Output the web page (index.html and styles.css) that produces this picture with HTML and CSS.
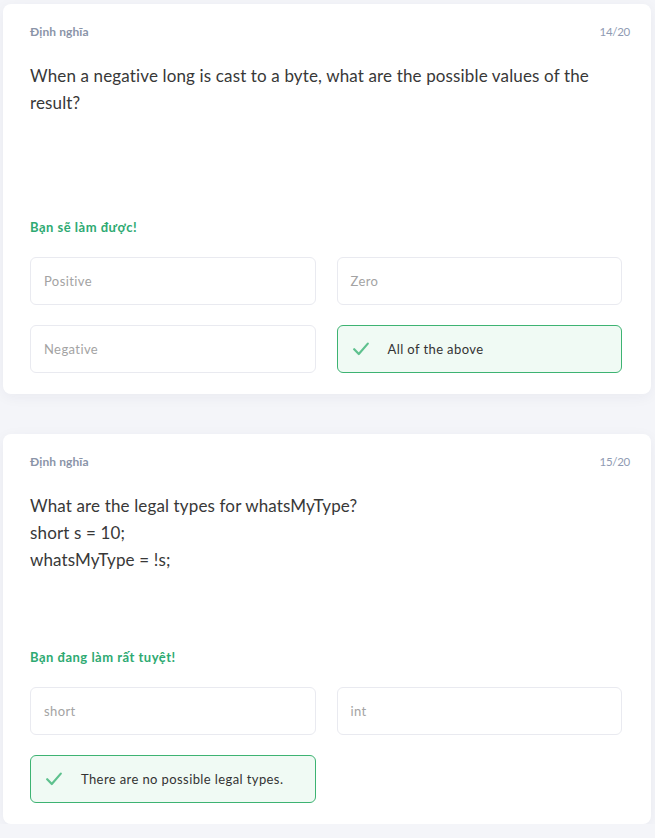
FILE: index.html
```html
<!DOCTYPE html>
<html lang="vi">
<head>
<meta charset="utf-8">
<title>Quiz</title>
<link rel="stylesheet" href="styles.css">
</head>
<body>
<div class="list">
  <section class="card">
    <div class="head"><span class="cat">Định nghĩa</span><span class="count">14/20</span></div>
    <div class="question">When a negative long is cast to a byte, what are the possible values of the result?</div>
    <div class="cheer">Bạn sẽ làm được!</div>
    <div class="options">
      <div class="opt">Positive</div>
      <div class="opt">Zero</div>
      <div class="opt">Negative</div>
      <div class="opt correct"><svg class="check" viewBox="0 0 16 14" width="16" height="14"><path d="M1.2 7.2 L5.8 12 L14.8 1.6" fill="none" stroke="#5ec18e" stroke-width="2.2" stroke-linecap="round" stroke-linejoin="round"/></svg><span>All of the above</span></div>
    </div>
  </section>
  <section class="card">
    <div class="head"><span class="cat">Định nghĩa</span><span class="count">15/20</span></div>
    <div class="question">What are the legal types for whatsMyType?<br>short s = 10;<br>whatsMyType = !s;</div>
    <div class="cheer">Bạn đang làm rất tuyệt!</div>
    <div class="options">
      <div class="opt">short</div>
      <div class="opt">int</div>
      <div class="opt correct"><svg class="check" viewBox="0 0 16 14" width="16" height="14"><path d="M1.2 7.2 L5.8 12 L14.8 1.6" fill="none" stroke="#5ec18e" stroke-width="2.2" stroke-linecap="round" stroke-linejoin="round"/></svg><span>There are no possible legal types.</span></div>
    </div>
  </section>
</div>
</body>
</html>
```

FILE: styles.css
```css
html, body {
  margin: 0;
  padding: 0;
  background: #f4f5f9;
}
body {
  font-family: Lato, "Noto Sans", sans-serif;
  color: #333;
}
.list {
  padding: 4px 4px 0 3px;
  display: flex;
  flex-direction: column;
  gap: 40px;
}
.card {
  background: #fff;
  border-radius: 8px;
  padding: 20px 21px 21px 27px;
  box-shadow: 0 3px 14px rgba(30, 40, 80, 0.05);
}
.head {
  display: flex;
  justify-content: space-between;
  font-size: 12px;
  line-height: 16px;
}
.cat {
  font-weight: 700;
  color: #8a94a8;
  letter-spacing: 0.1px;
}
.count {
  font-size: 11.5px;
  color: #8f9bb3;
  letter-spacing: -0.3px;
}
.question {
  margin-top: 22px;
  height: 157px;
  font-size: 17px;
  line-height: 27px;
  letter-spacing: 0.14px;
  color: #383838;
}
.cheer {
  font-size: 13px;
  line-height: 16px;
  font-weight: 700;
  letter-spacing: 0.5px;
  color: #2eaa72;
}
.options {
  margin-top: 22px;
  margin-right: 8px;
  display: grid;
  grid-template-columns: 1fr 1fr;
  column-gap: 21px;
  row-gap: 20px;
}
.opt {
  height: 48px;
  box-sizing: border-box;
  border: 1px solid #e9eaf0;
  border-radius: 6px;
  padding: 0 13px;
  display: flex;
  align-items: center;
  font-size: 13px;
  letter-spacing: 0.4px;
  color: #a3a3a3;
}
.opt.correct {
  background: #f0faf4;
  border-color: #3db372;
  color: #333;
  padding-left: 15px;
}
.check {
  margin-right: 19px;
  flex-shrink: 0;
}
```
